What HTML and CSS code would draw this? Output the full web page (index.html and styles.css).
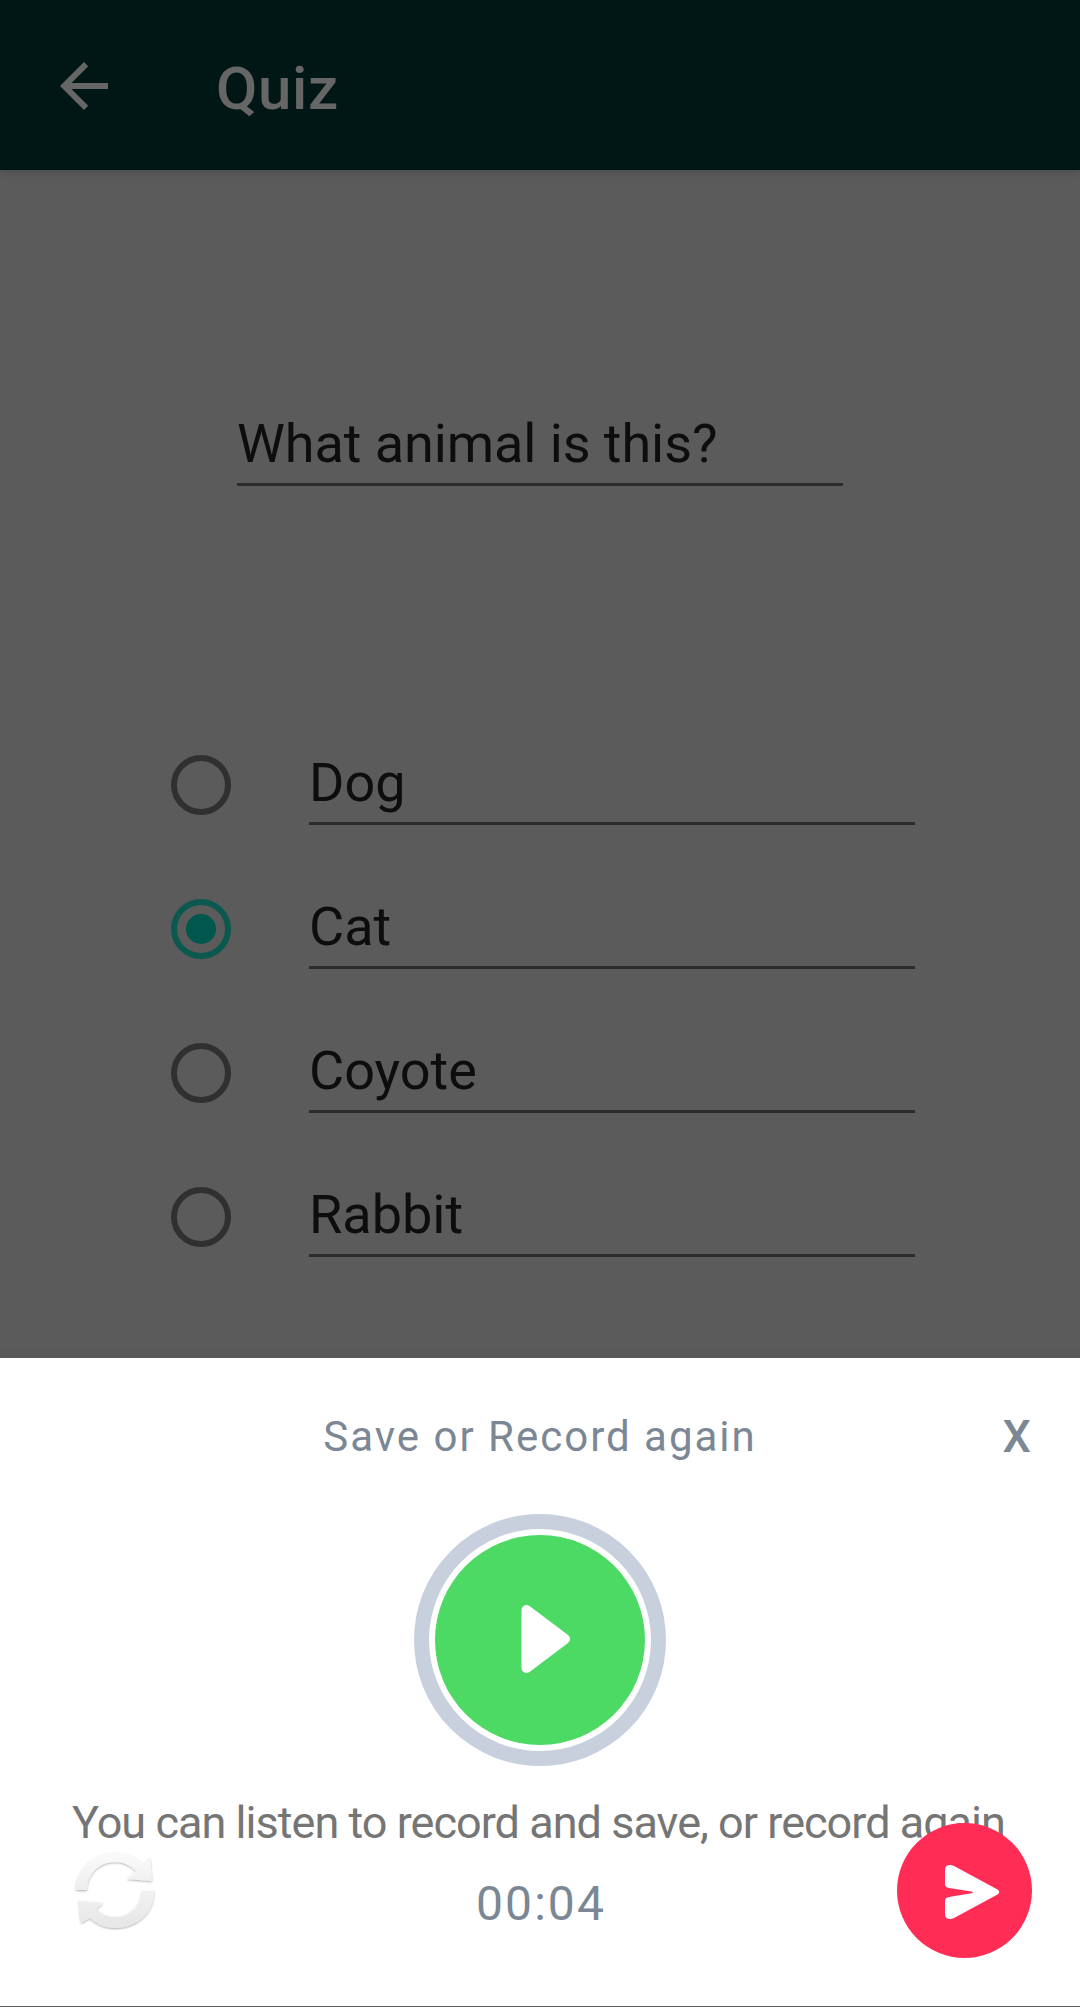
FILE: index.html
```html
<!DOCTYPE html>
<html lang="en">
<head>
<meta charset="utf-8">
<title>Quiz</title>
<link rel="stylesheet" href="styles.css">
</head>
<body>
<div class="screen">
  <header class="toolbar">
    <svg class="back" viewBox="0 0 24 24" aria-label="Back"><path d="M20 11H7.83l5.59-5.59L12 4l-8 8 8 8 1.41-1.41L7.83 13H20z"/></svg>
    <h1 class="toolbar-title">Quiz</h1>
  </header>
  <main class="quiz">
    <div class="field question">What animal is this?</div>
    <div class="options">
      <div class="option"><span class="radio"></span><div class="field">Dog</div></div>
      <div class="option"><span class="radio checked"></span><div class="field">Cat</div></div>
      <div class="option"><span class="radio"></span><div class="field">Coyote</div></div>
      <div class="option"><span class="radio"></span><div class="field">Rabbit</div></div>
    </div>
  </main>
  <section class="sheet">
    <div class="sheet-header">
      <h2 class="sheet-title">Save or Record again</h2>
      <span class="close">X</span>
    </div>
    <svg class="play" viewBox="0 0 252 252" aria-label="Play">
      <circle cx="126" cy="126" r="118.5" fill="none" stroke="#c8d0de" stroke-width="15"/>
      <circle cx="126" cy="126" r="105" fill="#4cd964"/>
      <path d="M112.500 96V154L151 125Z" fill="#fff" stroke="#fff" stroke-width="10" stroke-linejoin="round"/>
    </svg>
    <p class="hint">You can listen to record and save, or record again</p>
    <div class="timer">00:04</div>
    <svg class="refresh" viewBox="0 0 100 94" aria-label="Record again">
      <defs>
        <linearGradient id="upper" x1="0" y1="0" x2="0" y2="1"><stop offset="0" stop-color="#fafafa"/><stop offset="1" stop-color="#eeeeee"/></linearGradient>
        <linearGradient id="lower" x1="0" y1="0" x2="0" y2="1"><stop offset="0" stop-color="#f2f2f2"/><stop offset="1" stop-color="#e6e6e6"/></linearGradient>
        <filter id="soft" x="-10%" y="-10%" width="120%" height="130%"><feDropShadow dx="0" dy="1" stdDeviation="0.8" flood-color="#000" flood-opacity="0.32"/></filter>
      </defs>
      <g filter="url(#soft)">
        <path fill="url(#upper)" d="M10 47C11 25 28 10 49 10C61 10 71 15 78 22L84 14L86 38L61 36L70 28C64 22 57 19 49 19C33 19 21 31 21 47Z"/>
        <path fill="url(#lower)" d="M76 48H88C88 70 71 85 49 85C39 85 30 81 24 75L15 80L13 58L37 60L30 66C35 71 41 74 49 74C64 74 75 63 76 48Z"/>
      </g>
    </svg>
    <svg class="send" viewBox="0 0 135 135" aria-label="Save">
      <circle cx="67.500" cy="67.500" r="67.500" fill="#ff2d55"/>
      <path fill="#fff" d="M48 47Q48 42 53 42Q55 42 57 43L100.500 66.500Q104 69 100.500 71.500L57 95Q55 96 53 96Q48 96 48 91V78Q48 74.500 52 74L73 70.500Q79 69.300 73 68.200L52 65Q48 64.500 48 61Z"/>
    </svg>
  </section>
</div>
</body>
</html>
```
FILE: styles.css
```css
* {
  box-sizing: border-box;
}

body {
  margin: 0;
  font-family: Roboto, "Noto Sans", sans-serif;
}

h1,
h2,
p {
  margin: 0;
}

.screen {
  display: flex;
  flex-direction: column;
  width: 1080px;
  height: 2007px;
  background: #5b5b5b;
}

.toolbar {
  display: flex;
  align-items: flex-start;
  flex: none;
  gap: 96px;
  height: 170px;
  padding: 50px 48px 0;
  background: #001715;
  box-shadow: 0 2px 9px rgba(0, 0, 0, 0.18);
}

.back {
  width: 72px;
  height: 72px;
  fill: #666;
}

.toolbar-title {
  margin-top: 4px;
  font-size: 60px;
  font-weight: 500;
  line-height: 70px;
  letter-spacing: 0.7px;
  color: #666;
}

.quiz {
  display: flex;
  flex: none;
  flex-direction: column;
  gap: 265px;
  height: 1188px;
  padding: 242px 165px 0 171px;
}

.field {
  width: 606px;
  height: 74px;
  border-bottom: 3px solid #2c2c2c;
  font-size: 54px;
  line-height: 63px;
  color: #0d0d0d;
}

.question {
  margin-left: 66px;
  letter-spacing: -0.08px;
}

.options {
  display: flex;
  flex-direction: column;
  gap: 70px;
}

.option {
  display: flex;
  justify-content: space-between;
}

.radio {
  display: flex;
  align-items: center;
  justify-content: center;
  width: 60px;
  height: 60px;
  margin-top: 4px;
  border: 6px solid #303030;
  border-radius: 50%;
}

.radio.checked {
  border-color: #0b584f;
}

.radio.checked::after {
  content: "";
  width: 30px;
  height: 30px;
  border-radius: 50%;
  background: #00574d;
}

.sheet {
  position: relative;
  display: flex;
  flex: none;
  flex-direction: column;
  align-items: center;
  height: 649px;
  padding-top: 54px;
  border-bottom: 1px solid #5b5b5b;
  background: #fff;
  box-shadow: 0 0 12px rgba(0, 0, 0, 0.08);
}

.sheet-header {
  display: grid;
  grid-template-columns: 1fr auto 1fr;
  width: 100%;
  padding: 0 49px;
  line-height: 50px;
  color: #7b8794;
}

.sheet-title {
  grid-column: 2;
  font-size: 42px;
  font-weight: 400;
  letter-spacing: 2px;
}

.close {
  justify-self: end;
  font-size: 45px;
  font-weight: 500;
}

.play {
  flex: none;
  width: 252px;
  height: 252px;
  margin: 52px 0 30px;
}

.hint {
  margin-right: 3px;
  font-size: 45px;
  line-height: 53px;
  letter-spacing: -0.97px;
  white-space: nowrap;
  color: #757575;
}

.timer {
  margin: 27px 0 0 2px;
  font-size: 48px;
  line-height: 56px;
  letter-spacing: 2.1px;
  color: #7b8794;
}

/* The two action buttons float over the hint text. */
.refresh {
  position: absolute;
  bottom: 69px;
  left: 66px;
  width: 100px;
  height: 94px;
}

.send {
  position: absolute;
  right: 48px;
  bottom: 48px;
  width: 135px;
  height: 135px;
}
```
